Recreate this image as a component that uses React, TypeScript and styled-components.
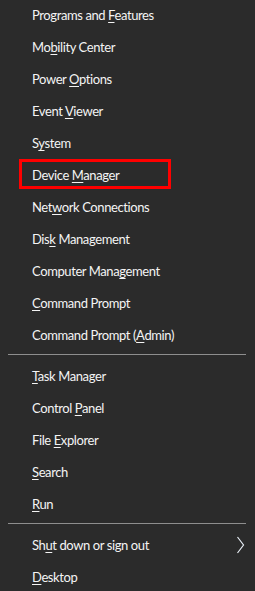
import React from 'react';
import styled, { createGlobalStyle } from 'styled-components';

const GlobalStyle = createGlobalStyle`
  html, body {
    margin: 0;
    padding: 0;
    background: #2b2b2b;
  }
`;

const Menu = styled.nav`
  width: 255px;
  height: 591px;
  overflow: hidden;
  background: #2b2b2b;
  font-family: Lato, 'Noto Sans', sans-serif;
  font-size: 13px;
  letter-spacing: -0.4px;
  color: #f4f4f4;
`;

const List = styled.div`
  display: flex;
  flex-direction: column;
  margin-top: -1px;
`;

const Item = styled.div<{ $marked?: boolean }>`
  position: relative;
  display: flex;
  align-items: center;
  justify-content: space-between;
  height: 32px;
  padding: 0 10px 0 32px;
  white-space: nowrap;

  ${(p) =>
    p.$marked &&
    `
    &::after {
      content: '';
      position: absolute;
      left: 19px;
      top: 0;
      width: 146px;
      height: 24px;
      border: 3px solid #ff0000;
    }
  `}
`;

const Key = styled.span`
  text-decoration: underline;
  text-decoration-thickness: 1px;
  text-underline-offset: 2px;
`;

const Separator = styled.div`
  height: 1px;
  margin: 3px 9px 5px 8px;
  background: #8e8e8e;
`;

const Chevron = styled.svg`
  width: 9px;
  height: 18px;
`;

type Entry = { label: string; sub?: boolean; marked?: boolean } | 'sep';

const entries: Entry[] = [
  { label: 'Programs and &Features' },
  { label: 'Mo&bility Center' },
  { label: 'Power &Options' },
  { label: 'Event &Viewer' },
  { label: 'S&ystem' },
  { label: 'Device &Manager', marked: true },
  { label: 'Net&work Connections' },
  { label: 'Dis&k Management' },
  { label: 'Computer Mana&gement' },
  { label: '&Command Prompt' },
  { label: 'Command Prompt (&Admin)' },
  'sep',
  { label: '&Task Manager' },
  { label: 'Control &Panel' },
  { label: 'File &Explorer' },
  { label: '&Search' },
  { label: '&Run' },
  'sep',
  { label: 'Sh&ut down or sign out', sub: true },
  { label: '&Desktop' },
];

function Label({ text }: { text: string }) {
  const i = text.indexOf('&');
  if (i < 0) return <span>{text}</span>;
  return (
    <span>
      {text.slice(0, i)}
      <Key>{text[i + 1]}</Key>
      {text.slice(i + 2)}
    </span>
  );
}

export default function App() {
  return (
    <>
      <GlobalStyle />
      <Menu>
        <List>
          {entries.map((e, idx) =>
            e === 'sep' ? (
              <Separator key={idx} />
            ) : (
              <Item key={idx} $marked={e.marked}>
                <Label text={e.label} />
                {e.sub && (
                  <Chevron viewBox="0 0 9 18">
                    <polyline points="1.5,1 7.5,9 1.5,17" fill="none" stroke="#e8eef6" strokeWidth="1.2" />
                  </Chevron>
                )}
              </Item>
            ),
          )}
        </List>
      </Menu>
    </>
  );
}
